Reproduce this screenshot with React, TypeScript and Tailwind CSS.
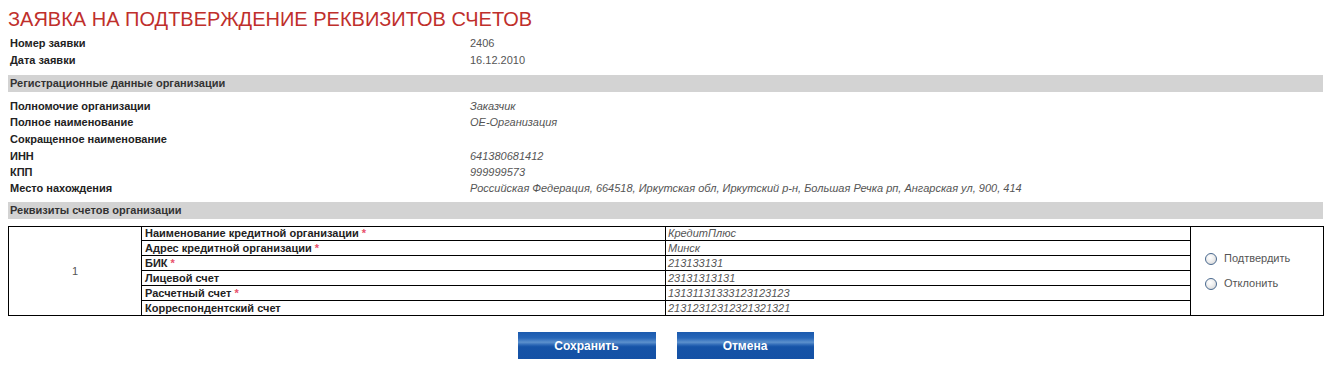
import React from 'react';

const topRows = [
  { label: 'Номер заявки', value: '2406' },
  { label: 'Дата заявки', value: '16.12.2010' },
];

const orgRows = [
  { label: 'Полномочие организации', value: 'Заказчик' },
  { label: 'Полное наименование', value: 'ОЕ-Организация' },
  { label: 'Сокращенное наименование', value: '', tall: true },
  { label: 'ИНН', value: '641380681412' },
  { label: 'КПП', value: '999999573' },
  {
    label: 'Место нахождения',
    value: 'Российская Федерация, 664518, Иркутская обл, Иркутский р-н, Большая Речка рп, Ангарская ул, 900, 414',
  },
];

const accountRows = [
  { label: 'Наименование кредитной организации', value: 'КредитПлюс', required: true },
  { label: 'Адрес кредитной организации', value: 'Минск', required: true },
  { label: 'БИК', value: '213133131', required: true },
  { label: 'Лицевой счет', value: '23131313131', required: false },
  { label: 'Расчетный счет', value: '13131131333123123123', required: true },
  { label: 'Корреспондентский счет', value: '21312312312321321321', required: false },
];

function SectionBar({ children }: { children: React.ReactNode }) {
  return (
    <div className="flex h-[17px] items-center bg-[#d3d3d3] pl-[2px] font-bold text-[#333]">{children}</div>
  );
}

function Radio({ label }: { label: string }) {
  return (
    <label className="flex h-[13px] items-center gap-[4px] text-[#555]">
      <span className="inline-block h-[12px] w-[12px] rounded-full border border-[#4a6a90] bg-[radial-gradient(circle_at_40%_35%,#ffffff_0%,#f0f0f0_40%,#cfcfcf_100%)]" />
      <span className="ml-[3px]">{label}</span>
    </label>
  );
}

function BlueButton({ children, width }: { children: React.ReactNode; width: string }) {
  return (
    <button
      className={`${width} h-[27px] bg-[linear-gradient(to_bottom,#1b5aae_0%,#2766b8_22%,#5b90cd_38%,#2a66b5_48%,#1553a7_55%,#1451a5_100%)] text-[12px] font-bold text-white`}
    >
      {children}
    </button>
  );
}

export default function App() {
  return (
    <div className="bg-white pl-2 pr-[10px] font-['Liberation_Sans',Arial,sans-serif] text-[11px] text-[#222]">
      <h1 className="pt-[7px] text-[20px] leading-[24px] font-normal text-[#bf2f2c]">
        ЗАЯВКА НА ПОДТВЕРЖДЕНИЕ РЕКВИЗИТОВ СЧЕТОВ
      </h1>

      <div className="mt-[4px]">
        {topRows.map((r) => (
          <div key={r.label} className="flex h-[17px] items-center">
            <div className="w-[462px] pl-[2px] font-bold">{r.label}</div>
            <div className="text-[#555]">{r.value}</div>
          </div>
        ))}
      </div>

      <div className="mt-[6px]">
        <SectionBar>Регистрационные данные организации</SectionBar>
      </div>

      <div className="mt-[6px]">
        {orgRows.map((r) => (
          <div key={r.label} className={`flex items-center ${r.tall ? 'h-[18px]' : 'h-[16px]'}`}>
            <div className="w-[462px] pl-[2px] font-bold">{r.label}</div>
            <div className="italic text-[#555]">{r.value}</div>
          </div>
        ))}
      </div>

      <div className="mt-[6px]">
        <SectionBar>Реквизиты счетов организации</SectionBar>
      </div>

      <table className="mt-[7px] w-full table-fixed border-collapse">
        <colgroup>
          <col className="w-[133px]" />
          <col className="w-[524px]" />
          <col className="w-[525px]" />
          <col className="w-[133px]" />
        </colgroup>
        <tbody>
          {accountRows.map((r, i) => {
            const h = i === 0 ? 'h-[14px]' : 'h-[15px]';
            return (
              <tr key={r.label}>
                {i === 0 && (
                  <td rowSpan={6} className="border border-black text-center align-middle text-[#555]">
                    1
                  </td>
                )}
                <td className={`${h} border border-black py-0 pl-[3px] leading-[13px] font-bold`}>
                  {r.label}
                  {r.required && <span className="text-[#e8506a]"> *</span>}
                </td>
                <td className={`${h} border border-black py-0 pl-[2px] leading-[13px] italic text-[#555]`}>
                  {r.value}
                </td>
                {i === 0 && (
                  <td rowSpan={6} className="border border-black pl-[14px] align-middle">
                    <div className="flex flex-col gap-[12px]">
                      <Radio label="Подтвердить" />
                      <Radio label="Отклонить" />
                    </div>
                  </td>
                )}
              </tr>
            );
          })}
        </tbody>
      </table>

      <div className="mt-[16px] flex justify-center gap-[21px] pb-[10px]">
        <BlueButton width="w-[138px]">Сохранить</BlueButton>
        <BlueButton width="w-[137px]">Отмена</BlueButton>
      </div>
    </div>
  );
}
